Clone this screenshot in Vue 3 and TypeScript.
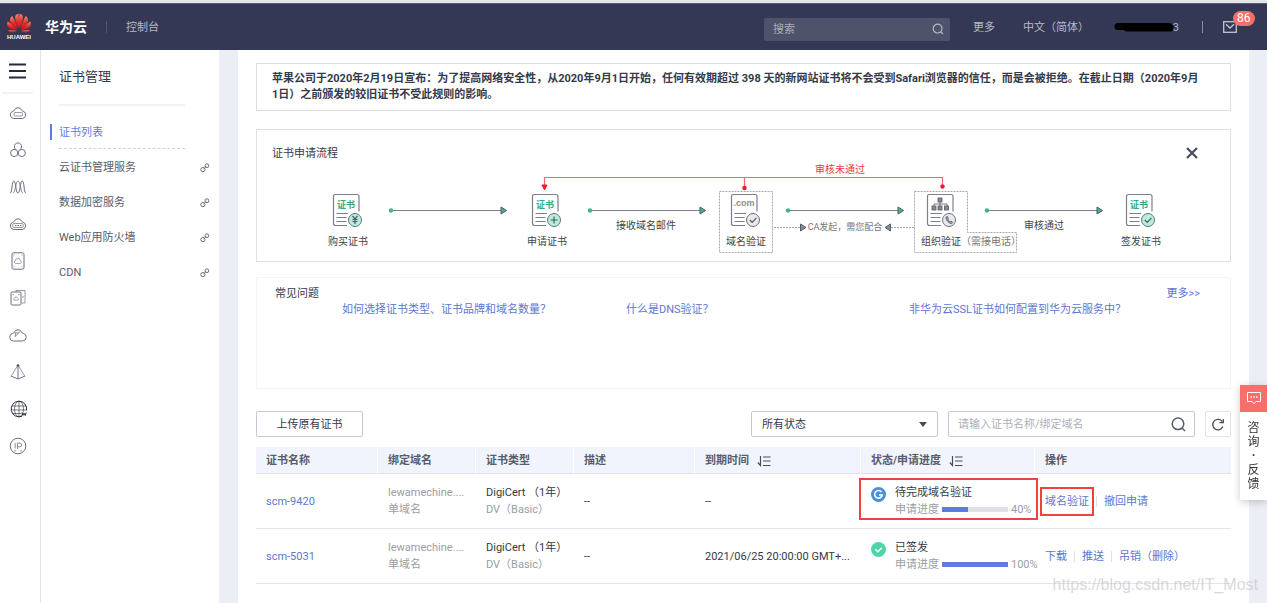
<script setup lang="ts">
import { ref } from 'vue'

type Stage = {
  x: number
  label: string
  mark: string
  badge: 'yen' | 'plus' | 'check' | 'phone'
  active: boolean
}

type Certificate = {
  name: string
  domain: string
  domainKind: string
  brand: string
  kind: string
  note: string
  expires: string
  status: string
  pending: boolean
  progress: number
  actions: string[]
}

const keyword = ref('')
const certKeyword = ref('')
const certStatus = ref('所有状态')
const flowOpen = ref(true)

const navLinks = ['云证书管理服务', '数据加密服务', 'Web应用防火墙', 'CDN']

const services = ['ecs', 'group', 'wave', 'server', 'disk', 'backup', 'cloud', 'prism', 'globe', 'ip']

const stages: Stage[] = [
  { x: 76, label: '购买证书', mark: '证书', badge: 'yen', active: true },
  { x: 275, label: '申请证书', mark: '证书', badge: 'plus', active: true },
  { x: 474, label: '域名验证', mark: '.com', badge: 'check', active: false },
  { x: 670, label: '组织验证', mark: '', badge: 'phone', active: false },
  { x: 869, label: '签发证书', mark: '证书', badge: 'check', active: true },
]

const arrows = [134, 333, 531, 730]

const faqs = [
  { id: 'type', text: '如何选择证书类型、证书品牌和域名数量？' },
  { id: 'dns', text: '什么是DNS验证？' },
  { id: 'deploy', text: '非华为云SSL证书如何配置到华为云服务中？' },
]

const columns = [
  { label: '证书名称', sortable: false },
  { label: '绑定域名', sortable: false },
  { label: '证书类型', sortable: false },
  { label: '描述', sortable: false },
  { label: '到期时间', sortable: true },
  { label: '状态/申请进度', sortable: true },
  { label: '操作', sortable: false },
]

const certificates: Certificate[] = [
  {
    name: 'scm-9420',
    domain: 'lewamechine....',
    domainKind: '单域名',
    brand: 'DigiCert （1年）',
    kind: 'DV（Basic）',
    note: '--',
    expires: '--',
    status: '待完成域名验证',
    pending: true,
    progress: 40,
    actions: ['域名验证', '撤回申请'],
  },
  {
    name: 'scm-5031',
    domain: 'lewamechine....',
    domainKind: '单域名',
    brand: 'DigiCert （1年）',
    kind: 'DV（Basic）',
    note: '--',
    expires: '2021/06/25 20:00:00 GMT+...',
    status: '已签发',
    pending: false,
    progress: 100,
    actions: ['下载', '推送', '吊销（删除）'],
  },
]
</script>

<template>
  <div class="console" lang="zh-CN">
    <header class="topbar">
      <a class="brand" href="#">
        <svg class="logo" viewBox="0 0 26 28" role="img" aria-label="HUAWEI">
          <defs>
            <linearGradient id="petal" x1="0" y1="0" x2="0" y2="1">
              <stop offset="0" stop-color="#f58a6c" />
              <stop offset="0.5" stop-color="#e5302b" />
              <stop offset="1" stop-color="#c4161c" />
            </linearGradient>
          </defs>
          <g fill="url(#petal)">
            <path d="M12.6 15.6C10.4 11 8.600 6.500 9.200 3.200C9.600 1.600 11 .8 12.400 .7C13.200 5 13.200 11 12.600 15.600Z" />
            <path d="M13.400 15.600C15.600 11 17.400 6.500 16.800 3.200C16.400 1.600 15 .8 13.600 .7C12.800 5 12.800 11 13.400 15.600Z" />
            <path d="M11.800 16.200C8.500 13.800 4.500 10.400 4 7.400C3.800 5.400 4.800 3.900 6.400 3.100C8.200 6.600 10.800 12 11.800 16.200Z" />
            <path d="M14.200 16.200C17.500 13.800 21.500 10.400 22 7.400C22.200 5.400 21.200 3.900 19.600 3.100C17.800 6.600 15.200 12 14.200 16.200Z" />
            <path d="M11.300 17C7.500 17 3.400 15.800 1.900 13.600C.8 11.800 1 10 1.800 8.600C5 10.700 9.300 14.200 11.300 17Z" />
            <path d="M14.700 17C18.500 17 22.600 15.800 24.100 13.600C25.200 11.800 25 10 24.200 8.600C21 10.700 16.700 14.200 14.700 17Z" />
            <path d="M11 17.700C8.800 19.200 6.200 19.900 4.500 19.200C3.200 18.700 2.600 17.900 2.300 16.900C5 17.100 8.500 17.300 11 17.700Z" />
            <path d="M15 17.700C17.200 19.200 19.800 19.900 21.500 19.200C22.800 18.700 23.400 17.900 23.700 16.900C21 17.100 17.500 17.300 15 17.700Z" />
          </g>
          <text x="13" y="26" text-anchor="middle" class="logo-name">HUAWEI</text>
        </svg>
        <span class="brand-name">华为云</span>
      </a>
      <span class="rule rule-brand"></span>
      <a class="top-link" href="#">控制台</a>
      <form class="search" @submit.prevent>
        <input v-model="keyword" type="text" placeholder="搜索" aria-label="搜索" />
        <button type="submit" aria-label="搜索">
          <svg viewBox="0 0 12 12" width="12" height="12" fill="none" stroke="#b5b8c8" stroke-width="1.200">
            <circle cx="5.600" cy="5.600" r="4.400" />
            <path d="M8.700 8.700L11 11" />
          </svg>
        </button>
      </form>
      <a class="top-link" href="#">更多</a>
      <a class="top-link lang" href="#">中文（简体）</a>
      <a class="account" href="#">
        <span>3</span>
        <svg viewBox="0 0 64 12" width="64" height="12" aria-hidden="true">
          <path d="M5 5.500H56" stroke="#000" stroke-width="7" stroke-linecap="round" />
          <path d="M14 7H57" stroke="#000" stroke-width="7" stroke-linecap="round" />
        </svg>
      </a>
      <span class="rule rule-mail"></span>
      <a class="mail" href="#" aria-label="消息">
        <svg viewBox="0 0 14 12" width="14" height="12" fill="none" stroke="#c3c5d1" stroke-width="1.300">
          <rect x=".7" y=".7" width="12.600" height="10.600" />
          <path d="M3 3.200L7 7L11 3.200" />
        </svg>
        <span class="badge">86</span>
      </a>
    </header>

    <div class="body">
      <nav class="rail" aria-label="服务">
        <button class="menu" type="button" aria-label="菜单">
          <svg viewBox="0 0 17 16" width="17" height="16" stroke="#252b3a" stroke-width="2">
            <path d="M0 1.500H17M0 8H17M0 14.500H17" />
          </svg>
        </button>
        <a v-for="s in services" :key="s" class="service" href="#" :aria-label="s">
          <svg viewBox="0 0 18 18" width="18" height="18" fill="none" stroke="#6b7080" stroke-width="1">
            <template v-if="s === 'ecs'">
              <path d="M4.500 14.500A3.800 3.800 0 0 1 3.800 7.200Q5 6.800 5.200 6.500A4 4 0 0 1 12.800 6.500Q13 6.900 14.200 7.200A3.800 3.800 0 0 1 13.500 14.500Z" />
              <rect x="5" y="8.500" width="8.500" height="3.500" rx="1" stroke-width=".7" />
            </template>
            <template v-else-if="s === 'group'">
              <path d="M7 8.500A3.600 3.600 0 1 1 11 8.500" />
              <circle cx="5.200" cy="12" r="3.600" />
              <circle cx="12.800" cy="12" r="3.600" />
            </template>
            <template v-else-if="s === 'wave'">
              <path d="M1 15C3.500 15 2.500 3 4.800 3S6.500 15 9 15S10.800 3 13.200 3S14.500 15 17 15" />
              <path d="M4 15C6.500 15 6.500 3 9 3S11.500 15 14 15" stroke-width=".8" />
            </template>
            <template v-else-if="s === 'server'">
              <path d="M4.500 14.500A3.800 3.800 0 0 1 3.800 7.200Q5 6.800 5.200 6.500A4 4 0 0 1 12.800 6.500Q13 6.900 14.200 7.200A3.800 3.800 0 0 1 13.500 14.500Z" />
              <rect x="3.800" y="8.500" width="10.400" height="4" rx="1" stroke-width=".7" />
              <path d="M6 10.500H7.500M8.500 10.500H10M11 10.500H12.500" stroke-width="1.200" />
            </template>
            <template v-else-if="s === 'disk'">
              <rect x="3" y=".8" width="12" height="16.400" rx="1.500" />
              <path d="M6.500 11.500A1.500 1.500 0 0 1 6.600 8.600A2.300 2.300 0 0 1 11.200 8.600A1.500 1.500 0 0 1 11.300 11.500Z" stroke-width=".6" />
              <path d="M4.500 3H5.500M12.500 3H13.500M4.500 15H5.500M12.500 15H13.500" stroke-width=".8" />
            </template>
            <template v-else-if="s === 'backup'">
              <rect x="2" y="3" width="10" height="13" rx="1.200" />
              <path d="M7 3V1.500H16V14H12.500M14 7V9" stroke-width=".7" />
              <path d="M5 11A1.200 1.200 0 0 1 5.500 9A1.700 1.700 0 0 1 8.700 9A1.200 1.200 0 0 1 9 11ZM3.500 5.500H5M9 5.500H10.500" stroke-width=".6" />
            </template>
            <template v-else-if="s === 'cloud'">
              <path d="M4.500 15A3.900 3.900 0 0 1 3.800 7.300Q5 6.900 5.200 6.500A4 4 0 0 1 12.800 6.500Q13 7.100 14.200 7.300A3.900 3.900 0 0 1 13.500 15Z" />
              <path d="M5.200 6.800L9.500 7L6.300 10.500L6.500 7.500M9.500 7L10.500 5.500" stroke-width=".8" />
            </template>
            <template v-else-if="s === 'prism'">
              <path d="M9 2L2 13.500M9 2L16 13.500" stroke-width=".7" />
              <path d="M9 2V16M2 13L9 16L16 13" />
              <circle cx="9" cy="2.500" r="1" fill="#252b3a" />
            </template>
            <template v-else-if="s === 'globe'">
              <g transform="translate(1 0)" stroke="#252b3a">
                <path d="M12 16.200A7.800 7.800 0 1 1 16.600 10.500" />
                <path d="M9 1.200V16.800M2 6H16M1.500 10H16.500M3 13.500H11" stroke-width=".6" />
                <ellipse cx="9" cy="9" rx="4.500" ry="7.800" stroke-width=".6" />
                <path d="M11.800 12.500L12.800 15.500L14 13L15.200 15.500L16.200 12.500" stroke-width="1" />
              </g>
            </template>
            <template v-else>
              <circle cx="9" cy="9" r="7.800" />
              <path d="M6.200 6V11.500M8.400 12V6H10.700A1.900 1.900 0 0 1 10.700 9.800H8.600" stroke="#8a8e99" />
              <path d="M5 13.800H7M11 13.800H13" stroke-width=".7" />
            </template>
          </svg>
        </a>
      </nav>

      <aside class="sidebar">
        <h1>证书管理</h1>
        <a class="nav-item current" href="#">证书列表</a>
        <a v-for="l in navLinks" :key="l" class="nav-item" href="#">
          <span>{{ l }}</span>
          <svg viewBox="0 0 10 10" width="10" height="10" fill="none" stroke="#6b7080">
            <circle cx="2.900" cy="6.600" r="2.100" />
            <circle cx="6.900" cy="2.700" r="1.900" />
            <path d="M3.600 6L6.400 3.300" />
          </svg>
        </a>
      </aside>

      <main class="content">
        <p class="notice">
          苹果公司于2020年2月19日宣布：为了提高网络安全性，从2020年9月1日开始，任何有效期超过 398 天的新网站证书将不会受到Safari浏览器的信任，而是会被拒绝。在截止日期（2020年9月1日）之前颁发的较旧证书不受此规则的影响。
        </p>

        <section v-if="flowOpen" class="flow">
          <div class="flow-head">
            <h2>证书申请流程</h2>
            <button type="button" aria-label="关闭" @click="flowOpen = false">
              <svg viewBox="0 0 12 12" width="12" height="12" stroke="#464c59" stroke-width="2.200">
                <path d="M1 1L11 11M11 1L1 11" />
              </svg>
            </button>
          </div>
          <svg class="flow-chart" viewBox="0 0 973 99">
            <g fill="none" stroke="#f4686c" stroke-width="1.200">
              <path d="M287.500 24V15.500H685.500V24M487.500 15.500V26" />
            </g>
            <g fill="#ec1c2c">
              <path d="M285 23H290L287.500 28Z" stroke="#ec1c2c" />
              <circle cx="487.500" cy="26" r="2.200" />
              <circle cx="685.500" cy="24.500" r="2.200" />
            </g>
            <text x="583" y="11" class="label alert" text-anchor="middle">审核未通过</text>

            <g fill="none" stroke="#a8a8a8" stroke-dasharray="2 1">
              <rect x="462.500" y="29.500" width="53" height="61" />
              <path d="M657.500 29.500H710.500V70.500H759.500V90.500H657.500Z" />
              <path d="M517 65.500H543M634 65.500H657" />
            </g>
            <g fill="#888a96" stroke="#575d6c">
              <path d="M543.500 62L549 65.500L543.500 69Z" />
              <path d="M633.500 62L628 65.500L633.500 69Z" />
            </g>
            <text x="588" y="68" class="hint" text-anchor="middle">CA发起，需您配合</text>

            <g v-for="a in arrows" :key="a">
              <path :d="`M${a} 48.500h110`" stroke="#7b7f8f" stroke-width="1.200" />
              <circle :cx="a" cy="48.500" r="2.200" fill="#43b38b" />
              <path :d="`M${a + 110} 45l5.500 3.500l-5.500 3.500z`" fill="#43b38b" stroke="#4c5a68" />
            </g>
            <text x="389" y="67" class="label" text-anchor="middle">接收域名邮件</text>
            <text x="787" y="67" class="label" text-anchor="middle">审核通过</text>

            <g v-for="s in stages" :key="s.label" :transform="`translate(${s.x} 32)`">
              <path
                d="M14 31.500H2.500Q.5 31.500 .5 29.500V2.500Q.5 .5 2.500 .5H24Q26 .5 26 2.500V17.500M3.500 19.500H15M3.500 23.500H13.500M3.500 27.500H13.500"
                fill="none"
                stroke="#7b7f8f"
                stroke-width="1.200"
              />
              <text v-if="s.mark" x="13" :y="s.active ? 14 : 12" text-anchor="middle" :class="['mark', { muted: !s.active }]">{{ s.mark }}</text>
              <g v-else fill="#8a8b90" stroke="#555a66" stroke-width=".8">
                <path d="M13 8V12M7 12V10H20V12" fill="none" />
                <rect x="11" y="4" width="4" height="4" />
                <rect x="5" y="12" width="4" height="4" />
                <rect x="11" y="12" width="4" height="4" />
                <rect x="17.500" y="12" width="4" height="4" />
              </g>
              <circle cx="22" cy="26" r="6.500" :fill="s.active ? '#b5efdb' : '#e9e9ec'" stroke="#6b7080" />
              <g fill="none" stroke="#4f5b66" stroke-width="1.200">
                <path v-if="s.badge === 'yen'" d="M19.500 22L22 25L24.500 22M22 25V30M19.500 25.500H24.500M19.500 27.500H24.500" />
                <path v-else-if="s.badge === 'plus'" d="M22 22.500V29.500M18.500 26H25.500" />
                <path v-else-if="s.badge === 'check'" d="M18.800 26L21.200 28.400L25.400 23.800" />
                <path v-else d="M20 22.200L18.900 23.500Q19.300 28 24.500 29.800L25.800 28.500L24 27L23 27.700Q21.200 26.500 20.800 25L21.400 24.200Z" fill="#9b9da6" stroke-width=".8" />
              </g>
              <text :x="s.badge === 'phone' ? 14 : 15" y="51" text-anchor="middle" class="label">{{ s.label }}</text>
            </g>
            <text x="704" y="83" class="label soft">（需接电话）</text>
          </svg>
        </section>

        <section class="faq">
          <h2>常见问题</h2>
          <a v-for="f in faqs" :key="f.id" :class="['question', f.id]" href="#">{{ f.text }}</a>
          <a class="faq-more" href="#">更多&gt;&gt;</a>
        </section>

        <div class="toolbar">
          <button class="upload" type="button">上传原有证书</button>
          <div class="select">
            <select v-model="certStatus" aria-label="状态">
              <option>所有状态</option>
            </select>
            <svg viewBox="0 0 8 5" width="8" height="5" aria-hidden="true"><path d="M0 0H8L4 5Z" fill="#464c59" /></svg>
          </div>
          <form class="lookup" @submit.prevent>
            <input v-model="certKeyword" type="text" placeholder="请输入证书名称/绑定域名" aria-label="证书名称/绑定域名" />
            <button type="submit" aria-label="查询">
              <svg viewBox="0 0 15 15" width="15" height="15" fill="none" stroke="#575d6c" stroke-width="1.500">
                <circle cx="7" cy="6.800" r="5.800" />
                <path d="M11 11L14 14" />
              </svg>
            </button>
          </form>
          <button class="refresh" type="button" aria-label="刷新">
            <svg viewBox="0 0 14 14" width="14" height="14" fill="none" stroke="#464c59" stroke-width="1.300">
              <path d="M11.800 9.500A5.200 5.200 0 1 1 11.300 4.700" />
              <path d="M12.300 2V5.700H8.500" />
            </svg>
          </button>
        </div>

        <table>
          <colgroup>
            <col class="c-name" /><col class="c-mid" /><col class="c-mid" /><col class="c-note" />
            <col class="c-date" /><col class="c-state" /><col />
          </colgroup>
          <thead>
            <tr>
              <th v-for="c in columns" :key="c.label" scope="col">
                {{ c.label }}
                <svg v-if="c.sortable" viewBox="0 0 14 12" width="14" height="12" fill="none" stroke="#464c59" stroke-width="1.200">
                  <path d="M3.500 1V10.500L.8 7.500" />
                  <path d="M6 2H13.500M6 6H13.500M6 10.500H13.500" />
                </svg>
              </th>
            </tr>
          </thead>
          <tbody>
            <tr v-for="c in certificates" :key="c.name">
              <td><a href="#">{{ c.name }}</a></td>
              <td class="dim">{{ c.domain }}<br />{{ c.domainKind }}</td>
              <td>{{ c.brand }}<br /><span class="dim">{{ c.kind }}</span></td>
              <td>{{ c.note }}</td>
              <td>{{ c.expires }}</td>
              <td :class="{ outlined: c.pending }">
                <div class="state">
                  <svg v-if="c.pending" viewBox="0 0 15 15" width="15" height="15">
                    <circle cx="7.500" cy="7.500" r="7.500" fill="#4a90d9" />
                    <path d="M10.500 5A3.800 3.800 0 1 0 11.200 8H8" fill="none" stroke="#fff" stroke-width="1.600" />
                  </svg>
                  <svg v-else viewBox="0 0 15 15" width="15" height="15">
                    <circle cx="7.500" cy="7.500" r="7.500" fill="#50d4ab" />
                    <path d="M4.300 7.300L6.800 9.700L10.900 5.700" fill="none" stroke="#fff" stroke-width="1.400" />
                  </svg>
                  <div>
                    <div>{{ c.status }}</div>
                    <div class="progress dim">
                      <span>申请进度</span>
                      <span class="track"><span class="fill" :style="{ width: c.progress + '%' }"></span></span>
                      <span>{{ c.progress }}%</span>
                    </div>
                  </div>
                </div>
              </td>
              <td>
                <div class="actions">
                  <a v-for="(a, i) in c.actions" :key="a" :class="{ marked: c.pending && i === 0 }" href="#">{{ a }}</a>
                </div>
              </td>
            </tr>
          </tbody>
        </table>
      </main>
    </div>

    <a class="feedback" href="#">
      <span class="feedback-icon">
        <svg viewBox="0 0 14 13" width="14" height="13" fill="none" stroke="#fff">
          <path d="M.5 .5H13.500V9.500H9L7 11.800L5 9.500H.5Z" />
          <path d="M3.500 5H5M6.300 5H7.800M9 5H10.500" stroke-width="1.400" />
        </svg>
      </span>
      <span class="feedback-text">咨询<b>·</b>反馈</span>
    </a>
    <span class="watermark">https://blog.csdn.net/IT_Most</span>
  </div>
</template>

<style>
body {
  margin: 0;
  background: #eceef5;
}
</style>

<style scoped>
.console {
  position: relative;
  display: flex;
  flex-direction: column;
  min-height: 100vh;
  box-sizing: border-box;
  overflow: hidden;
  border-top: 3px solid #e4e6ea;
  font: 11px/17px Roboto, "Noto Sans CJK SC", sans-serif;
  color: #343a48;
}

.console *,
.console *::before,
.console *::after {
  box-sizing: border-box;
}

a {
  color: #5e76d0;
  text-decoration: none;
}

button,
input,
select {
  margin: 0;
  padding: 0;
  border: 0;
  background: none;
  color: inherit;
  font: inherit;
}

svg {
  display: block;
  flex: none;
}

h1,
h2,
p {
  margin: 0;
  font-weight: 400;
}

h2 {
  font-size: 11px;
}

.topbar {
  display: flex;
  align-items: center;
  height: 47px;
  padding: 0 30px 0 6px;
  border-top: 1px solid #5a5e76;
  background: #343854;
}

.brand {
  display: flex;
  align-items: center;
  gap: 13px;
  color: #fff;
}

.logo {
  width: 26px;
  height: 28px;
}

.logo-name {
  font: bold 6px "Liberation Sans", sans-serif;
  fill: #fff;
}

.brand-name {
  font-size: 14px;
  font-weight: 700;
}

.rule {
  width: 1px;
  height: 12px;
}

.rule-brand {
  margin: 0 19px;
  background: #50546e;
}

.rule-mail {
  margin: 0 20px 0 23px;
  background: #8a8da0;
}

.top-link {
  color: #b5b8c8;
}

.search {
  display: flex;
  align-items: center;
  width: 186px;
  height: 23px;
  margin: 4px 23px 0 auto;
  padding: 0 6px 0 9px;
  border-radius: 2px;
  background: #4e526a;
}

.search input {
  flex: 1;
  min-width: 0;
  color: #fff;
  outline: 0;
}

.search input::placeholder {
  color: #a9acbc;
  opacity: 1;
}

.lang {
  margin: 0 24px 0 28px;
}

.account {
  display: grid;
  justify-items: end;
  align-items: center;
  color: #b5b8c8;
}

.account > * {
  grid-area: 1 / 1;
}

.account svg {
  margin-right: 2px;
}

.mail {
  position: relative;
}

.badge {
  position: absolute;
  left: 10px;
  bottom: 7px;
  padding: 0 4px;
  border-radius: 8px;
  background: #f66f6a;
  color: #fff;
  font-size: 12px;
  line-height: 15px;
}

.body {
  display: flex;
  flex: 1;
}

.rail {
  flex: none;
  width: 41px;
  padding: 0 6px 0 2px;
  border-right: 1px solid #e3e5e9;
  background: #fff;
}

.menu {
  display: grid;
  place-items: center;
  width: 31px;
  height: 44px;
  border-bottom: 2px solid #f0f1f3;
}

.service {
  display: grid;
  place-items: center;
  width: 31px;
  height: 37px;
}

.sidebar {
  flex: none;
  width: 178px;
  padding: 0 9px;
  background: #fff;
}

.sidebar h1 {
  margin: 0 25px 0 9px;
  padding: 17px 0 17px;
  border-bottom: 2px solid #f0f1f3;
  font-size: 13px;
  line-height: 20px;
}

.nav-item {
  display: flex;
  align-items: center;
  justify-content: space-between;
  height: 35px;
  padding-left: 9px;
  color: #575d6c;
}

.current {
  position: relative;
  height: 43px;
  margin: 0 25px 1px 0;
  padding: 10px 0 0 9px;
  color: #5e7ce0;
}

.current::before {
  content: "";
  position: absolute;
  left: 0;
  top: 18px;
  width: 2px;
  height: 16px;
  background: #5e7ce0;
}

.current::after {
  content: "";
  position: absolute;
  left: 9px;
  right: 0;
  bottom: 0;
  border-bottom: 1px dashed #cfd2d8;
}

.content {
  flex: 1;
  min-width: 0;
  margin: 0 18px 0 19px;
  padding: 13px 18px 18px;
  background: #fff;
}

.notice {
  padding: 7px 30px 7px 15px;
  border: 1px solid #dcdee2;
  font-weight: 700;
  line-height: 16px;
}

.flow {
  margin-top: 18px;
  border: 1px solid #e0e1e4;
}

.flow-head {
  display: flex;
  align-items: center;
  justify-content: space-between;
  height: 32px;
  padding: 14px 32px 0 15px;
}

.flow-chart {
  width: 100%;
}

.label {
  font-size: 10px;
  fill: #444;
}

.alert {
  fill: #ec3945;
}

.soft {
  fill: #777;
}

.hint {
  font-size: 9px;
  fill: #777;
}

.mark {
  font-size: 9px;
  font-weight: 700;
  fill: #33ab80;
}

.muted {
  font-family: "Liberation Sans", sans-serif;
  fill: #8c8c8c;
}

.faq {
  display: grid;
  grid-template-columns: 67px 284px 283px 1fr auto;
  grid-template-rows: 16px 16px;
  min-height: 112px;
  margin-top: 15px;
  padding: 8px 30px 0 18px;
  border: 1px solid #f4f4f6;
  line-height: 16px;
}

.question {
  grid-row: 2;
}

.type {
  grid-column: 2;
}

.dns {
  grid-column: 3;
}

.deploy {
  grid-column: 4;
}

.faq-more {
  grid-area: 1 / 5;
}

.toolbar {
  display: flex;
  gap: 10px;
  height: 26px;
  margin: 22px 0 10px;
}

.toolbar > * {
  border: 1px solid #c5c8ce;
  border-radius: 2px;
}

.upload {
  width: 107px;
  margin-right: auto;
}

.select {
  position: relative;
  width: 187px;
}

.select select {
  width: 100%;
  height: 100%;
  padding: 0 10px;
  appearance: none;
}

.select svg {
  position: absolute;
  right: 10px;
  top: 10px;
  pointer-events: none;
}

.lookup {
  display: flex;
  align-items: center;
  width: 247px;
  padding: 0 8px 0 9px;
}

.lookup input {
  flex: 1;
  min-width: 0;
  outline: 0;
}

.lookup input::placeholder {
  color: #adb0b8;
  opacity: 1;
}

.toolbar .refresh {
  display: grid;
  place-items: center;
  width: 26px;
  border-color: #e3e5e9;
}

table {
  width: 100%;
  border-collapse: separate;
  border-spacing: 0;
  table-layout: fixed;
}

.c-name {
  width: 122px;
}

.c-mid {
  width: 98px;
}

.c-note {
  width: 121px;
}

.c-date {
  width: 166px;
}

.c-state {
  width: 174px;
}

th {
  height: 27px;
  padding: 0 10px;
  border-bottom: 1px solid #dfe1e6;
  border-right: 1px solid #fff;
  background: #f1f4fc;
  color: #575d6c;
  font-weight: 700;
  text-align: left;
  white-space: nowrap;
}

th:last-child {
  border-right: 0;
}

th svg {
  display: inline-block;
  margin-left: 5px;
  vertical-align: -3px;
}

td {
  position: relative;
  height: 55px;
  padding: 0 0 0 10px;
  border-bottom: 1px solid #e3e5ec;
  white-space: nowrap;
}

.dim {
  color: #9b9da3;
}

.state {
  display: flex;
  gap: 9px;
}

.state > svg {
  margin-top: 3px;
}

.progress {
  display: flex;
  align-items: center;
  gap: 3px;
}

.track {
  width: 66px;
  height: 5px;
  background: #dfe1e6;
}

.fill {
  display: block;
  height: 100%;
  background: #5e7ce0;
}

.outlined::after,
.marked::after {
  content: "";
  position: absolute;
  border: 2px solid #f0403f;
}

.outlined::after {
  inset: 4px -3px 8px -2px;
}

.actions {
  display: flex;
}

.actions a {
  position: relative;
}

.actions a + a {
  margin-left: 7px;
  padding-left: 7px;
  border-left: 1px solid #e3e5e9;
  border-image: linear-gradient(transparent 20%, #dfe1e6 20%, #dfe1e6 80%, transparent 80%) 1;
}

.marked::after {
  inset: -6px -5px;
}

.feedback {
  position: fixed;
  right: 0;
  top: 385px;
  width: 27px;
  background: #fff;
  box-shadow: 0 2px 8px rgba(0, 0, 0, 0.2);
  color: #333;
}

.feedback-icon {
  display: grid;
  place-items: center;
  height: 27px;
  background: #f66f6a;
}

.feedback-text {
  display: block;
  width: 12px;
  margin: 0 auto;
  padding: 9px 0;
  font-size: 12px;
  line-height: 14px;
  text-align: center;
  word-break: break-all;
}

.feedback-text b {
  display: block;
}

.watermark {
  position: absolute;
  right: 9px;
  bottom: 9px;
  color: rgba(190, 190, 196, 0.6);
  font: 16px/18px "Liberation Sans", sans-serif;
  pointer-events: none;
}
</style>
